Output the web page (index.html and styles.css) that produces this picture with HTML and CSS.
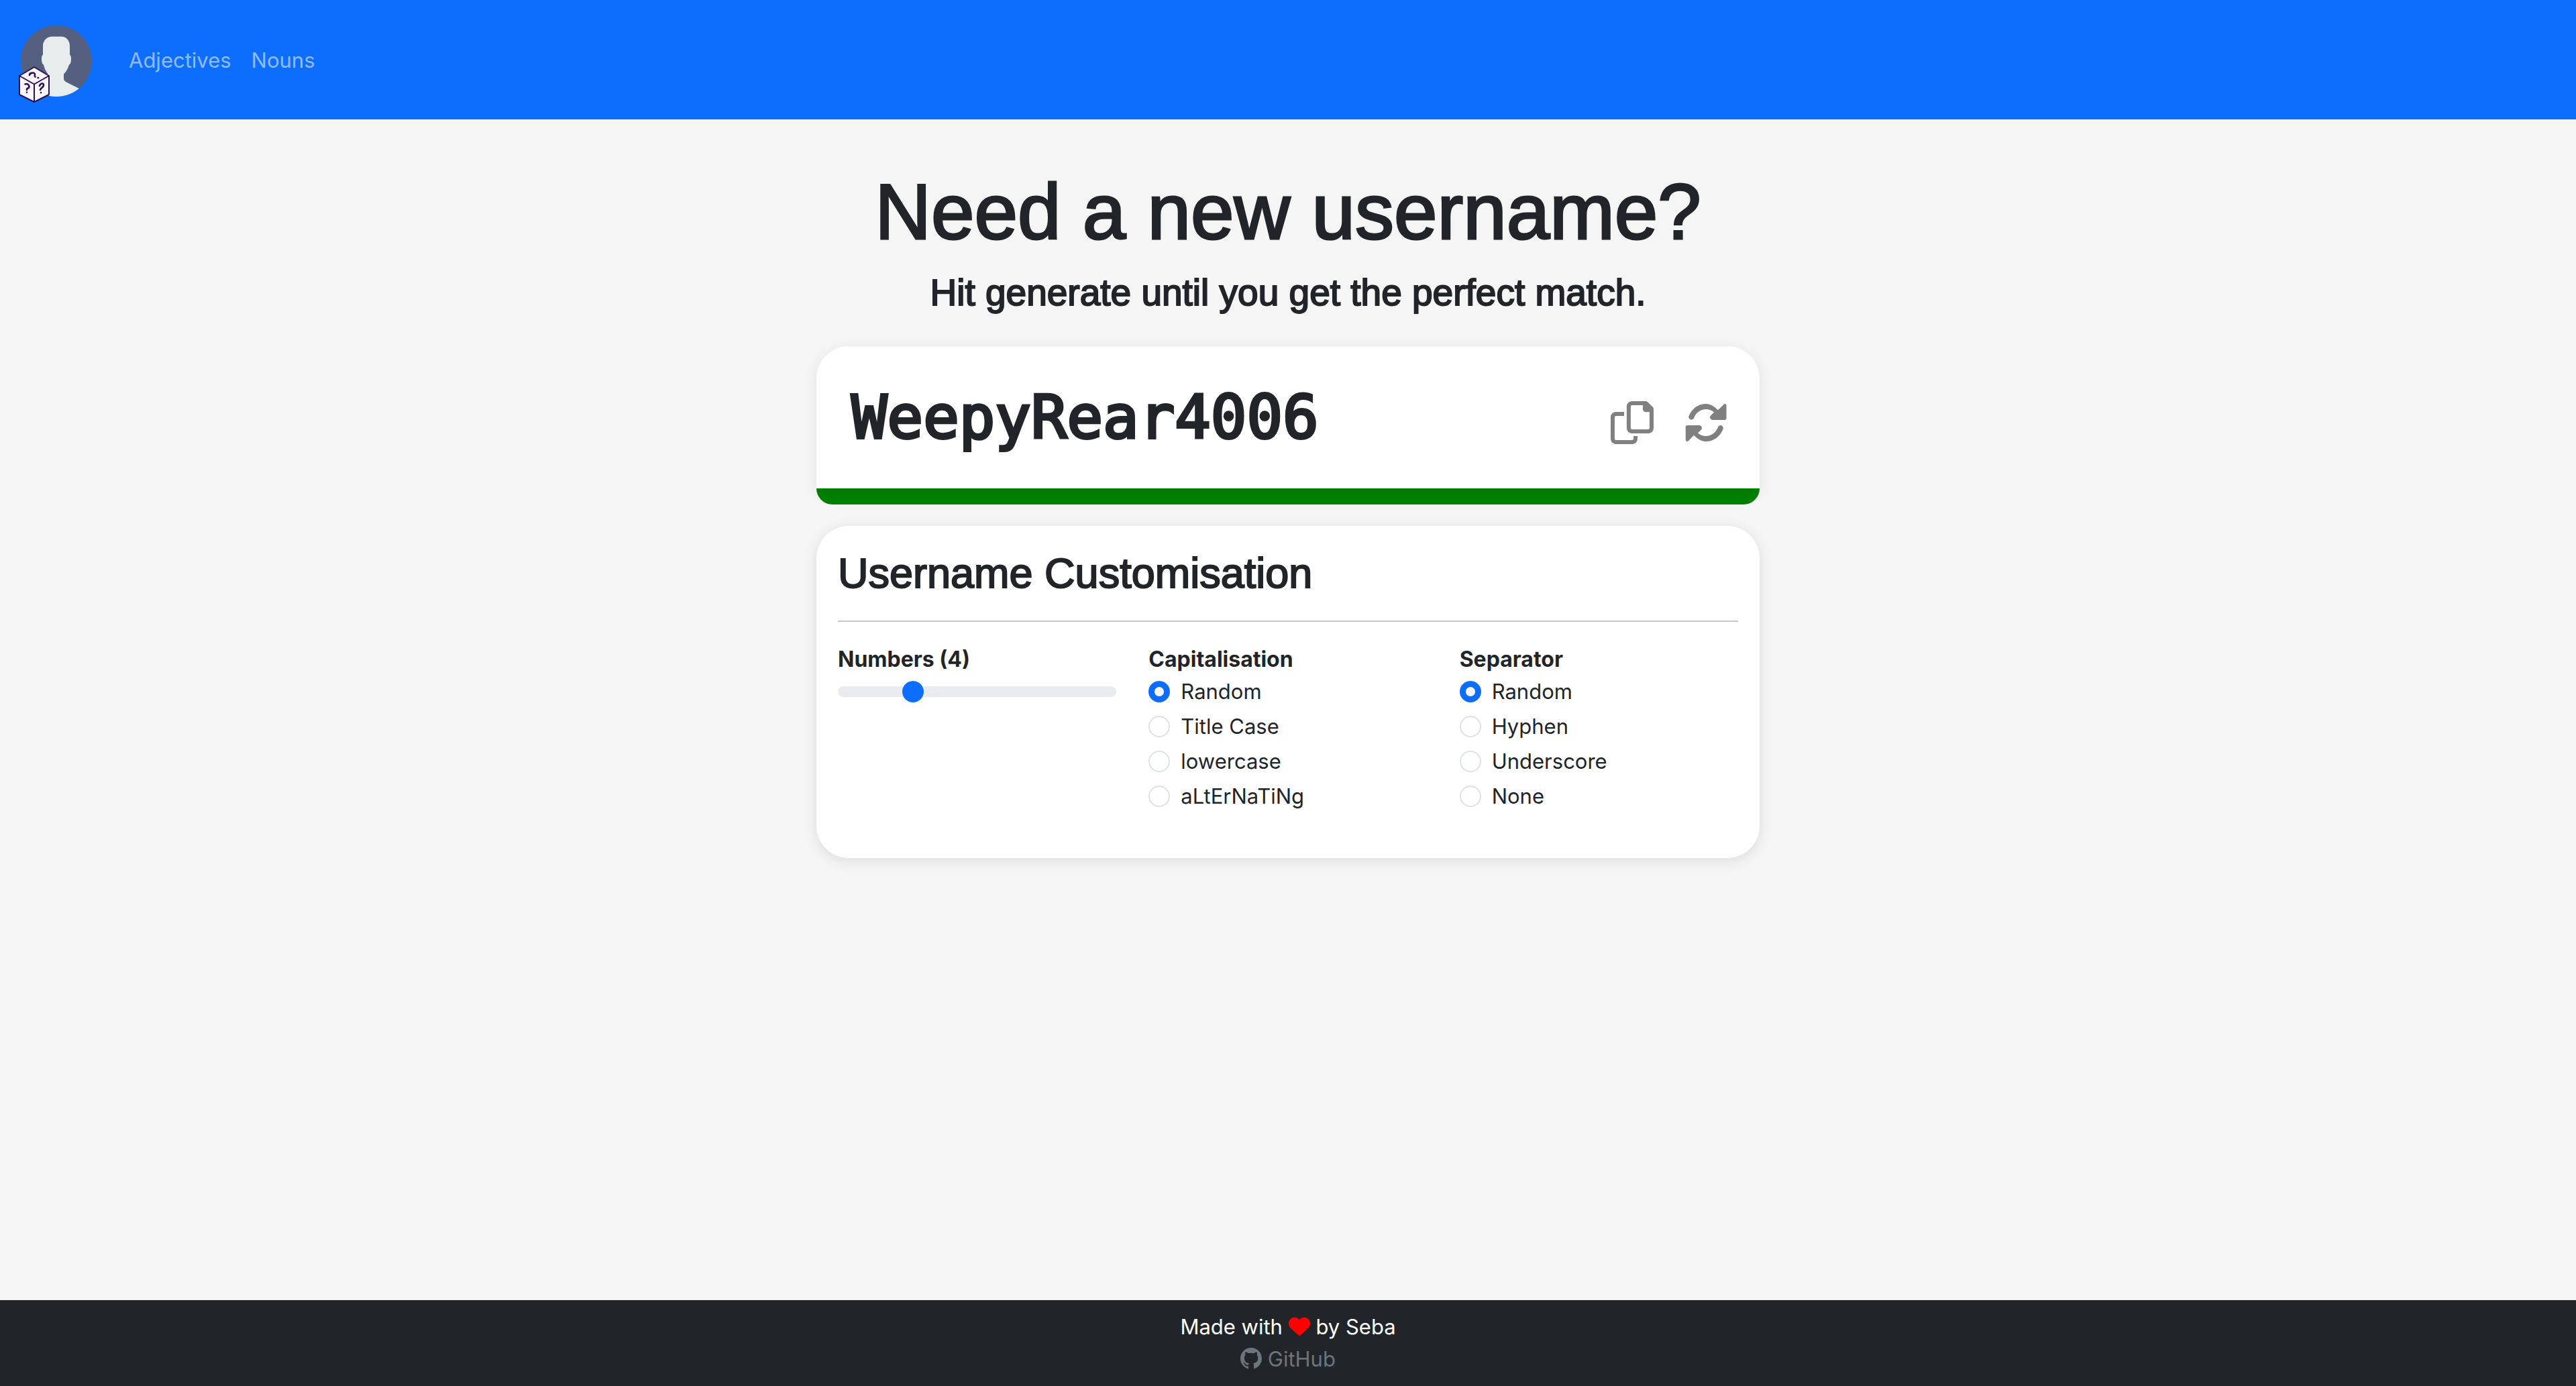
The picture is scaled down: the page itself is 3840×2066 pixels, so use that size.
FILE: index.html
```html
<!DOCTYPE html>
<html lang="en">
<head>
<meta charset="utf-8">
<title>Username Generator</title>
<meta name="viewport" content="width=device-width, initial-scale=1">
<link rel="stylesheet" href="styles.css">
</head>
<body>
<header class="navbar">
  <a class="brand" href="#" aria-label="Home">
    <svg class="logo" viewBox="0 -4 114 128" aria-hidden="true">
      <defs><clipPath id="disc"><circle cx="60" cy="62" r="53"/></clipPath></defs>
      <circle cx="60" cy="62" r="53" fill="#556080"/>
      <path clip-path="url(#disc)" fill="#e7eced" d="M54 25.500h13c8 0 13 6 13 14v13c2 2 2 4 2 7 0 4-1 7-3 8-2 6-4 10-8 14v6c0 3 1 4 4 6l20 10v20H27v-22l16-10c3-2 4-4 4-6v-5c-3-4-5-8-6-13-2-1-3-4-3-8 0-3 0-5 2-7v-13c0-8 6-14 14-14z"/>
      <g fill="#fdf6fc" stroke="#2a1259" stroke-width="2" stroke-linejoin="round">
        <path d="M27 71 49 84v28l-22 11-22-11V84z"/>
        <path fill="none" d="M5 84l22 12.500 22-12.500M27 96.500v26"/>
      </g>
      <g fill="none" stroke="#2a1259" stroke-width="2.600" stroke-linecap="round" stroke-linejoin="round">
        <path d="M13.500 96.500c3-1.500 6 1 6 4 0 3-4 1-3.500 4.500M16 108.500v.1M35 99c1-4 6.500-5 6-1s-4.500 4-5 7M37 109v.1M20 83c0-4 8-4.500 8-1.500 0 2-1 2 .5 4M32.500 87h.6"/>
      </g>
    </svg>
  </a>
  <nav class="links" aria-label="Main">
    <a href="#">Adjectives</a>
    <a href="#">Nouns</a>
  </nav>
</header>

<main class="content">
  <h1 class="title">Need a new username?</h1>
  <p class="subtitle">Hit generate until you get the perfect match.</p>

  <section class="result" aria-label="Generated username">
    <output class="username">WeepyRear4006</output>
    <div class="actions">
      <button type="button" class="icon-button" aria-label="Copy">
        <svg class="copy-icon" viewBox="0 0 512 512" aria-hidden="true"><path d="M502.600 70.630l-61.250-61.250C435.400 3.371 427.200 0 418.700 0H255.100c-35.350 0-64 28.660-64 64l.0195 256C192 355.400 220.700 384 256 384h192c35.200 0 64-28.800 64-64V93.250C512 84.770 508.600 76.630 502.600 70.630zM464 320c0 8.836-7.164 16-16 16H255.100c-8.838 0-16-7.164-16-16L239.100 64.130c0-8.836 7.164-16 16-16h128L384 96c0 17.670 14.330 32 32 32h47.100V320zM272 448c0 8.836-7.164 16-16 16H63.100c-8.838 0-16-7.164-16-16L47.980 192.100c0-8.836 7.164-16 16-16H160V128H63.990c-35.350 0-64 28.650-64 64l.0098 256C.002 483.300 28.660 512 64 512h192c35.200 0 64-28.800 64-64v-32h-47.100L272 448z"/></svg>
      </button>
      <button type="button" class="icon-button" aria-label="Generate">
        <svg class="sync-icon" viewBox="0 0 512 512" aria-hidden="true"><path d="M483.500 32c-5 0-9 2-13 5L400 106C361 66 310 32 256 32 161.500 32 86 92 52 178c-6 16 2 34 18 41 17 6 36-2 42-18C135 140 190 96 256 96c36 0 70 13 96 36l-38 38c-20 20-7 54 22 54h144c13 0 20-7 20-20V52c0-12-7-20-16.500-20zM442 290c-17-6-36 2-42 18C377 372 322 416 256 416c-36 0-70-13-96-36l38-38c20-20 7-54-22-54H32c-11 0-18 7-18 18v154c0 18 20 25 32 14l66-68C151 446 202 480 256 480c94.500 0 170-60 204-146 6-16-2-37-18-44z"/></svg>
      </button>
    </div>
  </section>
  <div class="strength"></div>

  <section class="card">
    <h2 class="card-title">Username Customisation</h2>
    <hr class="rule">
    <form class="columns">
      <div>
        <label class="group-title" for="numbers">Numbers (4)</label>
        <input class="range" id="numbers" type="range" min="0" max="16" value="4">
      </div>
      <fieldset class="group">
        <legend class="group-title">Capitalisation</legend>
        <label class="check"><input type="radio" name="caps" checked>Random</label>
        <label class="check"><input type="radio" name="caps">Title Case</label>
        <label class="check"><input type="radio" name="caps">lowercase</label>
        <label class="check"><input type="radio" name="caps">aLtErNaTiNg</label>
      </fieldset>
      <fieldset class="group">
        <legend class="group-title">Separator</legend>
        <label class="check"><input type="radio" name="sep" checked>Random</label>
        <label class="check"><input type="radio" name="sep">Hyphen</label>
        <label class="check"><input type="radio" name="sep">Underscore</label>
        <label class="check"><input type="radio" name="sep">None</label>
      </fieldset>
    </form>
  </section>
</main>

<footer class="footer">
  <div>Made with <svg class="heart" viewBox="0 0 512 512" aria-label="love"><path d="M0 190.900V185.100C0 115.200 50.520 55.580 119.400 44.100 164.100 36.510 211.400 51.370 244 84.020L256 96 267.100 84.020C300.600 51.370 347 36.510 392.600 44.100 461.500 55.580 512 115.200 512 185.100V190.900C512 232.400 494.800 272.100 464.400 300.400L283.700 469.100C276.200 476.100 266.300 480 256 480 245.700 480 235.800 476.100 228.300 469.100L47.590 300.400C17.230 272.100 0 232.400 0 190.900z"/></svg> by Seba</div>
  <a class="github" href="#"><svg class="mark" viewBox="0 0 16 16" aria-hidden="true"><path d="M8 0C3.580 0 0 3.580 0 8c0 3.540 2.290 6.530 5.470 7.590.4.070.55-.170.55-.380 0-.190-.010-.820-.010-1.490-2.010.370-2.530-.490-2.690-.940-.090-.230-.480-.940-.820-1.130-.280-.150-.680-.520-.010-.530.630-.010 1.080.580 1.230.820.720 1.210 1.870.870 2.330.660.070-.520.280-.870.510-1.070-1.780-.200-3.640-.890-3.640-3.950 0-.870.310-1.590.820-2.150-.080-.200-.360-1.020.080-2.120 0 0 .670-.210 2.200.820.640-.180 1.320-.270 2-.270s1.360.090 2 .270c1.530-1.040 2.200-.820 2.200-.820.440 1.100.160 1.920.080 2.120.510.560.820 1.270.820 2.150 0 3.070-1.870 3.750-3.650 3.950.290.250.540.730.540 1.480 0 1.070-.010 1.930-.010 2.200 0 .210.150.460.550.380A8.010 8.010 0 0 0 16 8c0-4.420-3.580-8-8-8z"/></svg> GitHub</a>
</footer>
</body>
</html>
```
FILE: styles.css
```css
* { box-sizing: border-box; }

body {
  margin: 0;
  min-height: 100vh;
  display: flex;
  flex-direction: column;
  background: #f5f5f5;
  color: #212529;
  font: 400 31px/48px Inter, "Noto Sans", sans-serif;
}

.navbar {
  display: flex;
  align-items: center;
  gap: 54px;
  height: 178px;
  padding: 0 24px;
  background: #0d6efd;
}
.brand { display: flex; }
.logo { width: 114px; height: 128px; }
.links { display: flex; gap: 30px; padding-top: 2px; }
.links a { color: rgba(255, 255, 255, .55); text-decoration: none; }

.content {
  flex: 1;
  width: 100%;
  max-width: 1406px;
  margin: 0 auto;
  padding-top: 72px;
}
/* A thin outline gives the regular face a medium weight. */
.title,
.subtitle,
.card-title {
  font-family: "Liberation Sans", Arial, sans-serif;
  font-weight: 400;
  -webkit-text-stroke: 2px #212529;
}
.title {
  margin: 0;
  font-size: 116px;
  line-height: 132px;
  text-align: center;
  -webkit-text-stroke-width: 3px;
}
.subtitle {
  margin: 20px 0 46px;
  font-size: 55px;
  line-height: 68px;
  text-align: center;
}

.result {
  position: relative;
  display: flex;
  align-items: center;
  justify-content: space-between;
  height: 212px;
  padding: 0 48px 0 52px;
  background: #fff;
  border-radius: 48px 48px 0 0;
  box-shadow: 0 4px 20px rgba(0, 0, 0, .08);
}
.username {
  font: 400 89px/108px "DejaVu Sans Mono", monospace;
  -webkit-text-stroke: 4px #212529;
}
.actions { display: flex; align-items: center; gap: 46px; }
.icon-button {
  display: flex;
  padding: 16px 0 0;
  border: 0;
  background: none;
  fill: gray;
}
.icon-button svg { width: 64px; height: 64px; }
.strength {
  height: 24px;
  background: green;
  border-radius: 0 0 24px 24px;
}

.card {
  margin-top: 32px;
  padding: 32px 32px 64px;
  background: #fff;
  border-radius: 48px;
  box-shadow: 0 4px 20px rgba(0, 0, 0, .1);
}
.card-title {
  margin: 0;
  font-size: 63px;
  line-height: 77px;
}
.rule {
  height: 2px;
  margin: 32px 0;
  border: 0;
  background: #c8c8c8;
}
.columns {
  display: grid;
  grid-template-columns: repeat(3, 1fr);
  gap: 48px;
}
.group { margin: 0; padding: 0; border: 0; min-width: 0; }
.group-title {
  display: block;
  padding: 0;
  font-size: 32px;
  line-height: 48px;
  font-weight: 700;
}
.check {
  display: flex;
  align-items: center;
  gap: 16px;
  height: 48px;
  margin-bottom: 4px;
}
input[type="radio"] {
  appearance: none;
  width: 32px;
  height: 32px;
  margin: 0;
  border: 2px solid #dee2e6;
  border-radius: 50%;
  background: #fff;
}
input[type="radio"]:checked {
  border: 9px solid #0d6efd;
}
.range {
  appearance: none;
  display: block;
  width: 100%;
  height: 48px;
  margin: 0;
  background: none;
}
.range::-webkit-slider-runnable-track {
  height: 16px;
  border-radius: 16px;
  background: #e9ecef;
}
.range::-webkit-slider-thumb {
  appearance: none;
  width: 32px;
  height: 32px;
  margin-top: -8px;
  border-radius: 50%;
  background: #0d6efd;
}

.footer {
  padding: 16px 0;
  background: #212529;
  color: #fff;
  text-align: center;
}
.heart, .mark { width: 32px; height: 32px; vertical-align: -4px; }
.heart { fill: red; }
.github { display: block; color: #6c757d; text-decoration: none; }
.mark { fill: #6c757d; }
```
